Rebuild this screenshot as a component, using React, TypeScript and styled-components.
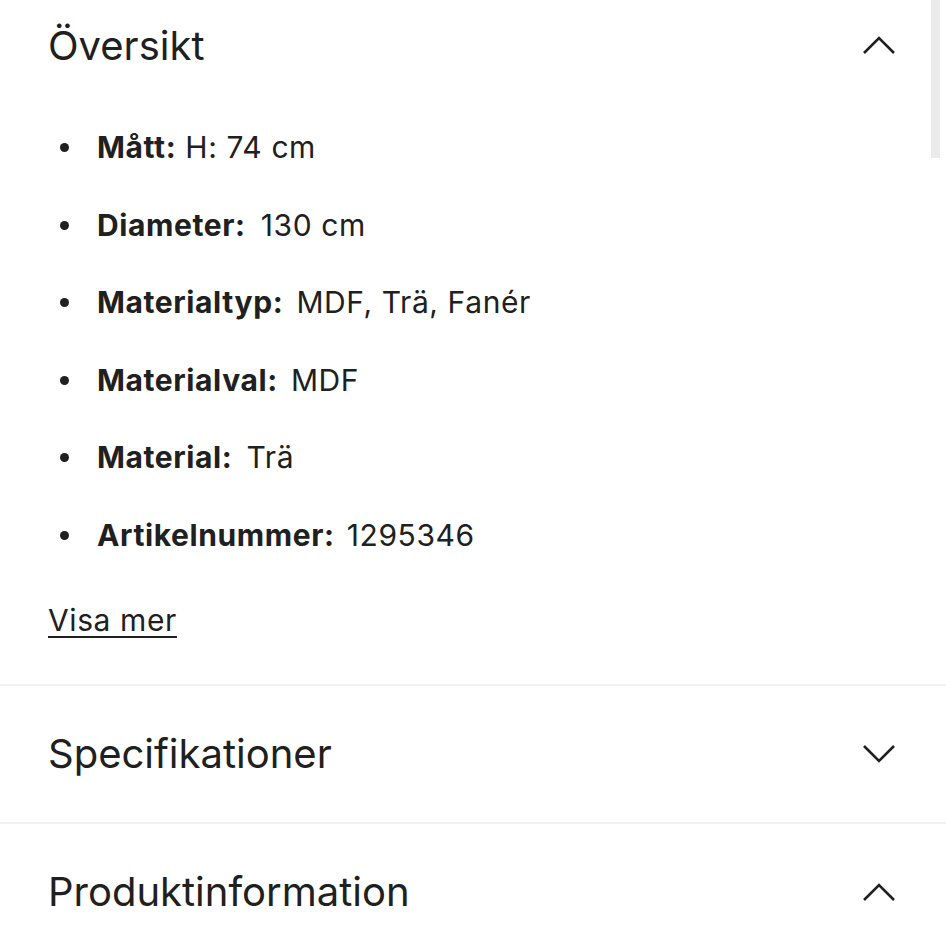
import React from "react";
import styled, { createGlobalStyle } from "styled-components";

const Global = createGlobalStyle`
  html, body { margin: 0; padding: 0; background: #fff; }
  body { font-family: Inter, "Open Sans", sans-serif; color: #202020; }
`;

const Page = styled.div`
  position: relative;
  width: 946px;
  height: 947px;
  overflow: hidden;
  background: #fff;
`;

const Scrollbar = styled.div`
  position: absolute;
  top: 0;
  right: 6px;
  width: 9px;
  height: 158px;
  background: #ebebeb;
`;

const Section = styled.section<{ $pad: number }>`
  padding: 0 50px ${(p) => p.$pad}px 48px;
  border-bottom: 2px solid #f1f1f1;
`;

const Header = styled.div<{ $h: number }>`
  height: ${(p) => p.$h}px;
  display: flex;
  align-items: center;
  justify-content: space-between;
`;

const Title = styled.h2`
  margin: 0;
  font-size: 40px;
  font-weight: 400;
  color: #202020;
  letter-spacing: 0;
`;

const List = styled.ul`
  list-style: none;
  margin: 39px 0 0 0;
  padding: 0;
  display: flex;
  flex-direction: column;
  gap: 41.6px;
`;

const Item = styled.li`
  position: relative;
  padding-left: 49px;
  height: 36px;
  line-height: 36px;
  font-size: 30px;
  letter-spacing: 0.6px;
  color: #202020;
  &::before {
    content: "";
    position: absolute;
    left: 12px;
    top: 14px;
    width: 9px;
    height: 9px;
    border-radius: 50%;
    background: #202020;
  }
`;

const Label = styled.b<{ $gap: number }>`
  font-weight: 700;
  margin-right: ${(p) => p.$gap}px;
`;

const More = styled.a`
  display: inline-block;
  margin-top: 49px;
  font-size: 30px;
  letter-spacing: 0.6px;
  line-height: 36px;
  color: #202020;
  text-decoration: underline;
  text-underline-offset: 5px;
  text-decoration-thickness: 2px;
`;

const Chevron = ({ up }: { up: boolean }) => (
  <svg width="34" height="20" viewBox="0 0 34 20">
    <polyline
      points={up ? "2,18 17,3 32,18" : "2,2 17,17 32,2"}
      fill="none"
      stroke="#202020"
      strokeWidth="2.6"
    />
  </svg>
);

const items: [string, string, number][] = [
  ["Mått:", "H: 74 cm", 0],
  ["Diameter:", "130 cm", 6],
  ["Materialtyp:", "MDF, Trä, Fanér", 4],
  ["Materialval:", "MDF", 4],
  ["Material:", "Trä", 5],
  ["Artikelnummer:", "1295346", 3],
];

export default function App() {
  return (
    <Page>
      <Global />
      <Section $pad={46}>
        <Header $h={90}>
          <Title>Översikt</Title>
          <Chevron up />
        </Header>
        <List>
          {items.map(([k, v, g]) => (
            <Item key={k}>
              <Label $gap={g}>{k}</Label> {v}
            </Item>
          ))}
        </List>
        <More href="#">Visa mer</More>
      </Section>
      <Section $pad={0}>
        <Header $h={136}>
          <Title>Specifikationer</Title>
          <Chevron up={false} />
        </Header>
      </Section>
      <Section $pad={0}>
        <Header $h={136}>
          <Title>Produktinformation</Title>
          <Chevron up />
        </Header>
      </Section>
      <Scrollbar />
    </Page>
  );
}
